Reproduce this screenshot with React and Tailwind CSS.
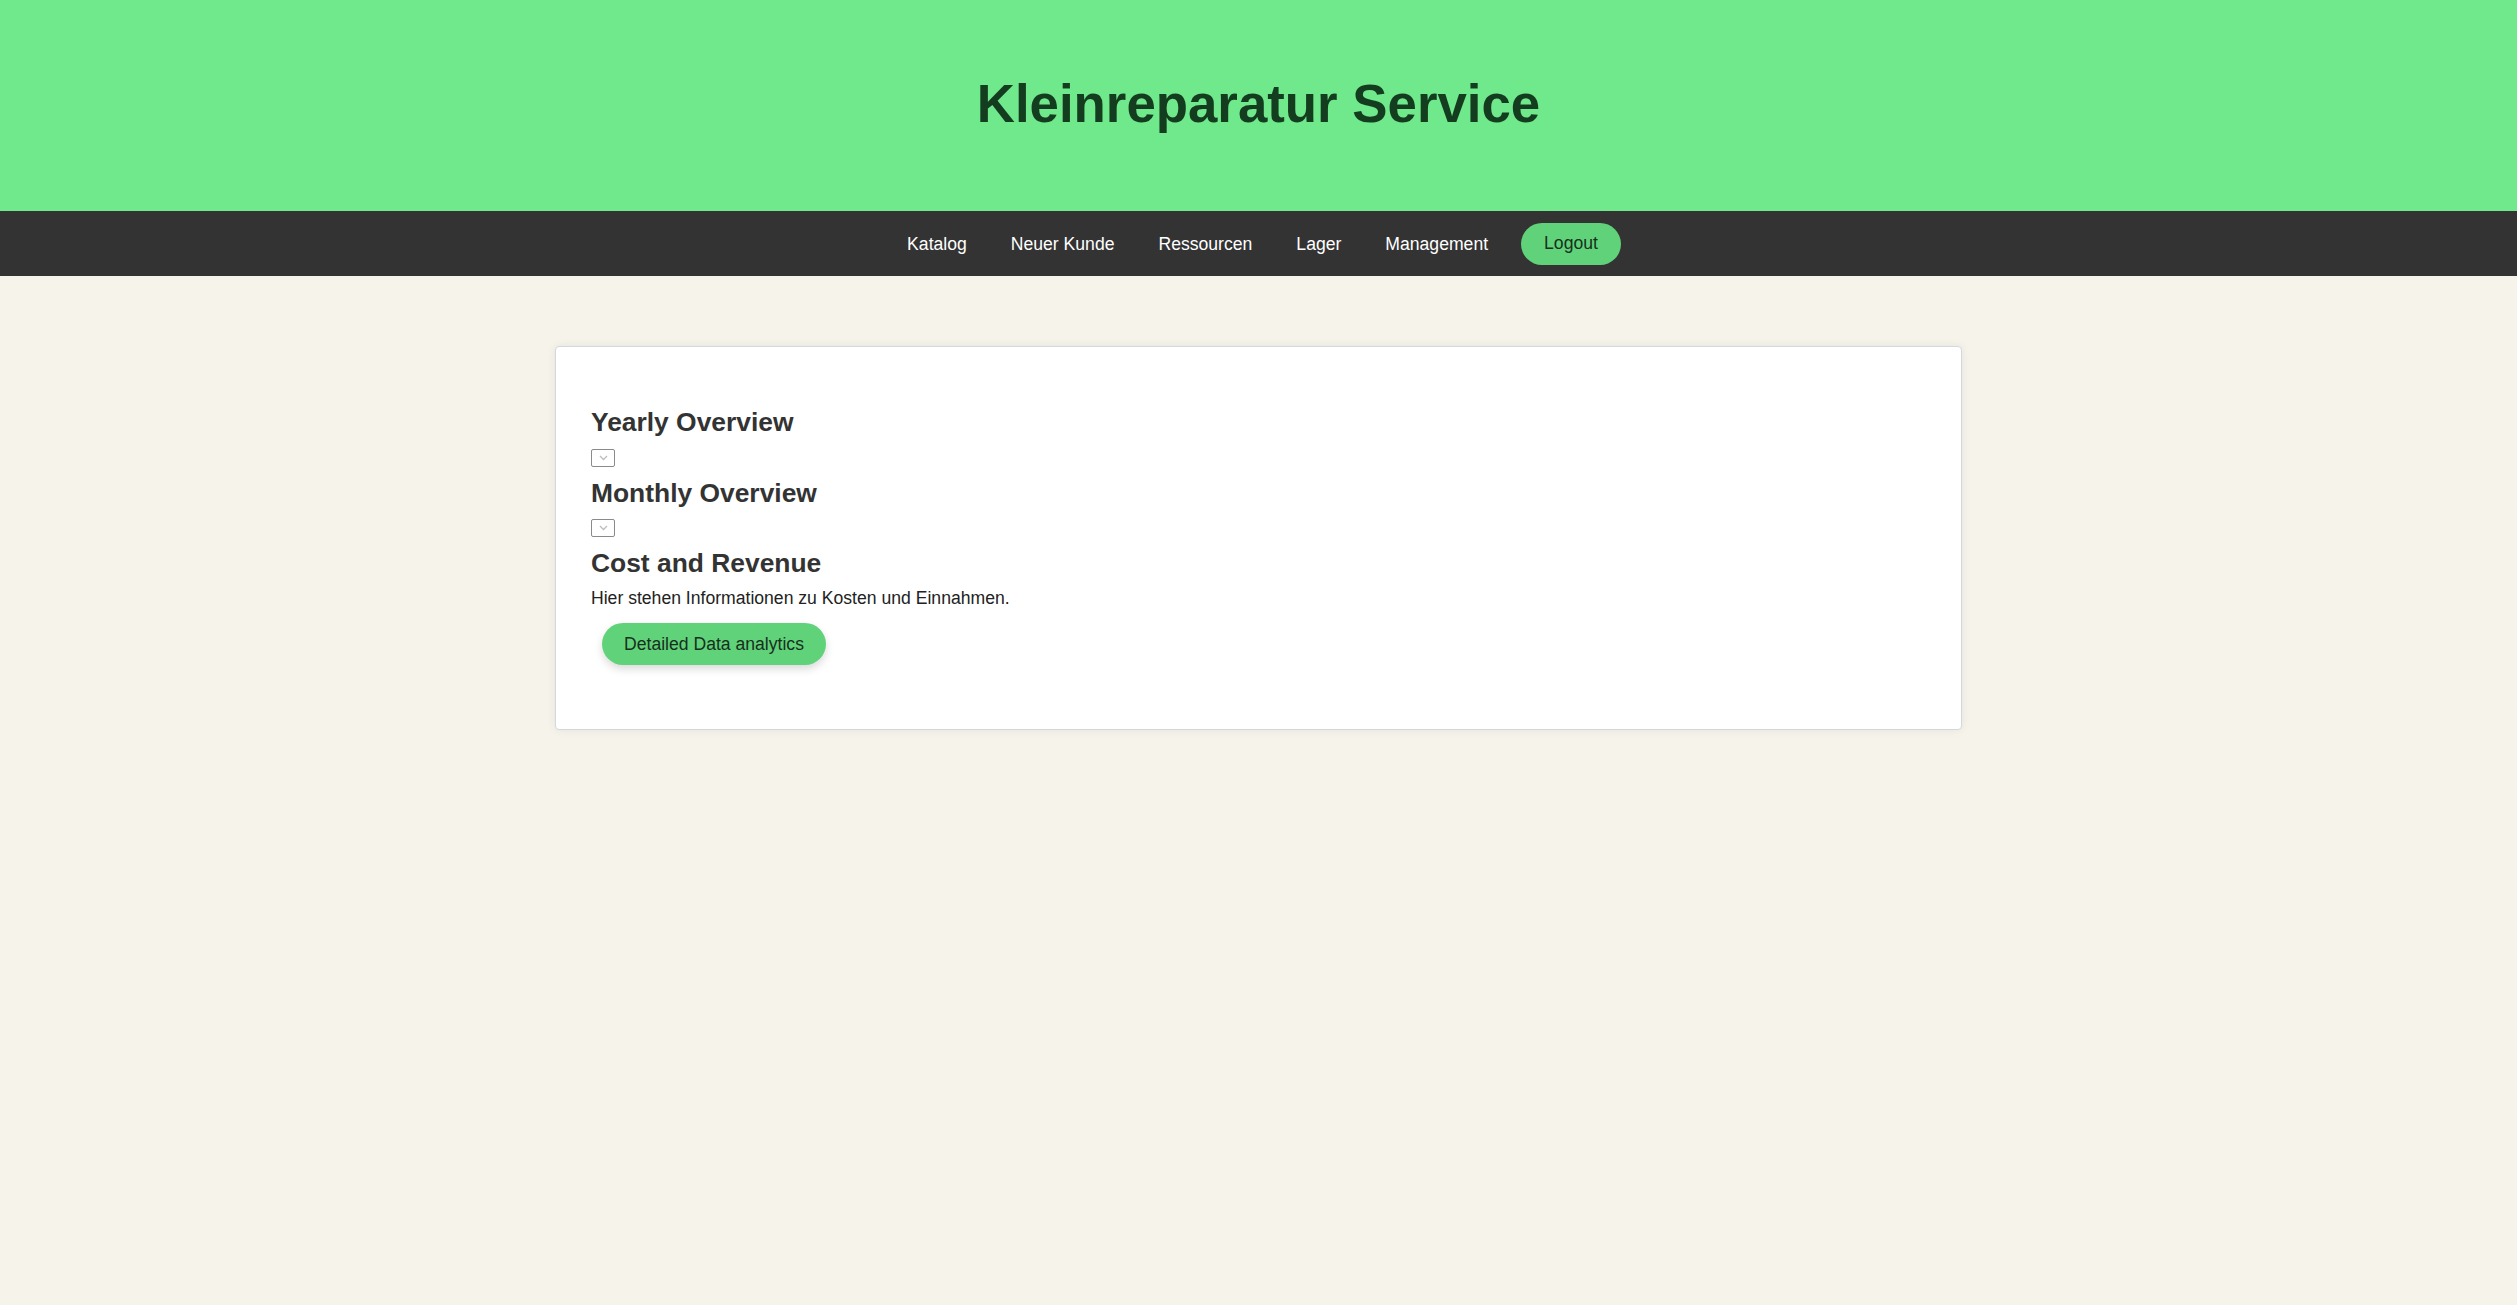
import React from "react";

function SelectBox() {
  return (
    <div className="w-[24px] h-[18px] border border-[#8a8a8a] rounded-[2px] bg-white flex items-center justify-center">
      <svg width="9" height="6" viewBox="0 0 9 6" fill="none">
        <path d="M1 1l3.5 3.5L8 1" stroke="#bdbdbd" strokeWidth="1.3" />
      </svg>
    </div>
  );
}

export default function App() {
  const font = { fontFamily: '"Liberation Sans", Arial, sans-serif' };
  return (
    <div className="min-h-[1305px] bg-[#f6f3ea]" style={font}>
      <header className="h-[211px] pb-[5px] bg-[#6fe98c] flex items-center justify-center">
        <h1 className="text-[52.8px] leading-[61px] font-bold text-[#143d1f]">Kleinreparatur Service</h1>
      </header>
      <nav className="h-[65px] bg-[#333333] flex items-center justify-center text-[17.6px]">
        {["Katalog", "Neuer Kunde", "Ressourcen", "Lager", "Management"].map((t) => (
          <a key={t} className="px-[22px] text-white leading-[20px]">{t}</a>
        ))}
        <button className="ml-[11px] mr-[11px] h-[42px] px-[23px] rounded-full bg-[#60d37a] text-[#17301c] text-[17.6px]">Logout</button>
      </nav>
      <main className="pt-[70px]">
        <div className="w-[1407px] mx-auto bg-white border border-[#d3d8de] rounded-[4px] shadow-[0_0_10px_rgba(0,0,0,0.07)] pt-[60px] px-[35px] pb-[64px]">
          <h3 className="text-[26.4px] leading-[30px] font-bold text-[#333333]">Yearly Overview</h3>
          <div className="mt-[12px]"><SelectBox /></div>
          <h3 className="mt-[11px] text-[26.4px] leading-[30px] font-bold text-[#333333]">Monthly Overview</h3>
          <div className="mt-[11px]"><SelectBox /></div>
          <h3 className="mt-[11px] text-[26.4px] leading-[30px] font-bold text-[#333333]">Cost and Revenue</h3>
          <p className="mt-[10px] text-[17.6px] leading-[20px] text-[#222222]">Hier stehen Informationen zu Kosten und Einnahmen.</p>
          <button className="mt-[15px] ml-[11px] h-[42px] px-[22px] rounded-full bg-[#60d37a] text-[#17301c] text-[17.6px] shadow-[0_4px_8px_rgba(0,0,0,0.15)]">Detailed Data analytics</button>
        </div>
      </main>
    </div>
  );
}
